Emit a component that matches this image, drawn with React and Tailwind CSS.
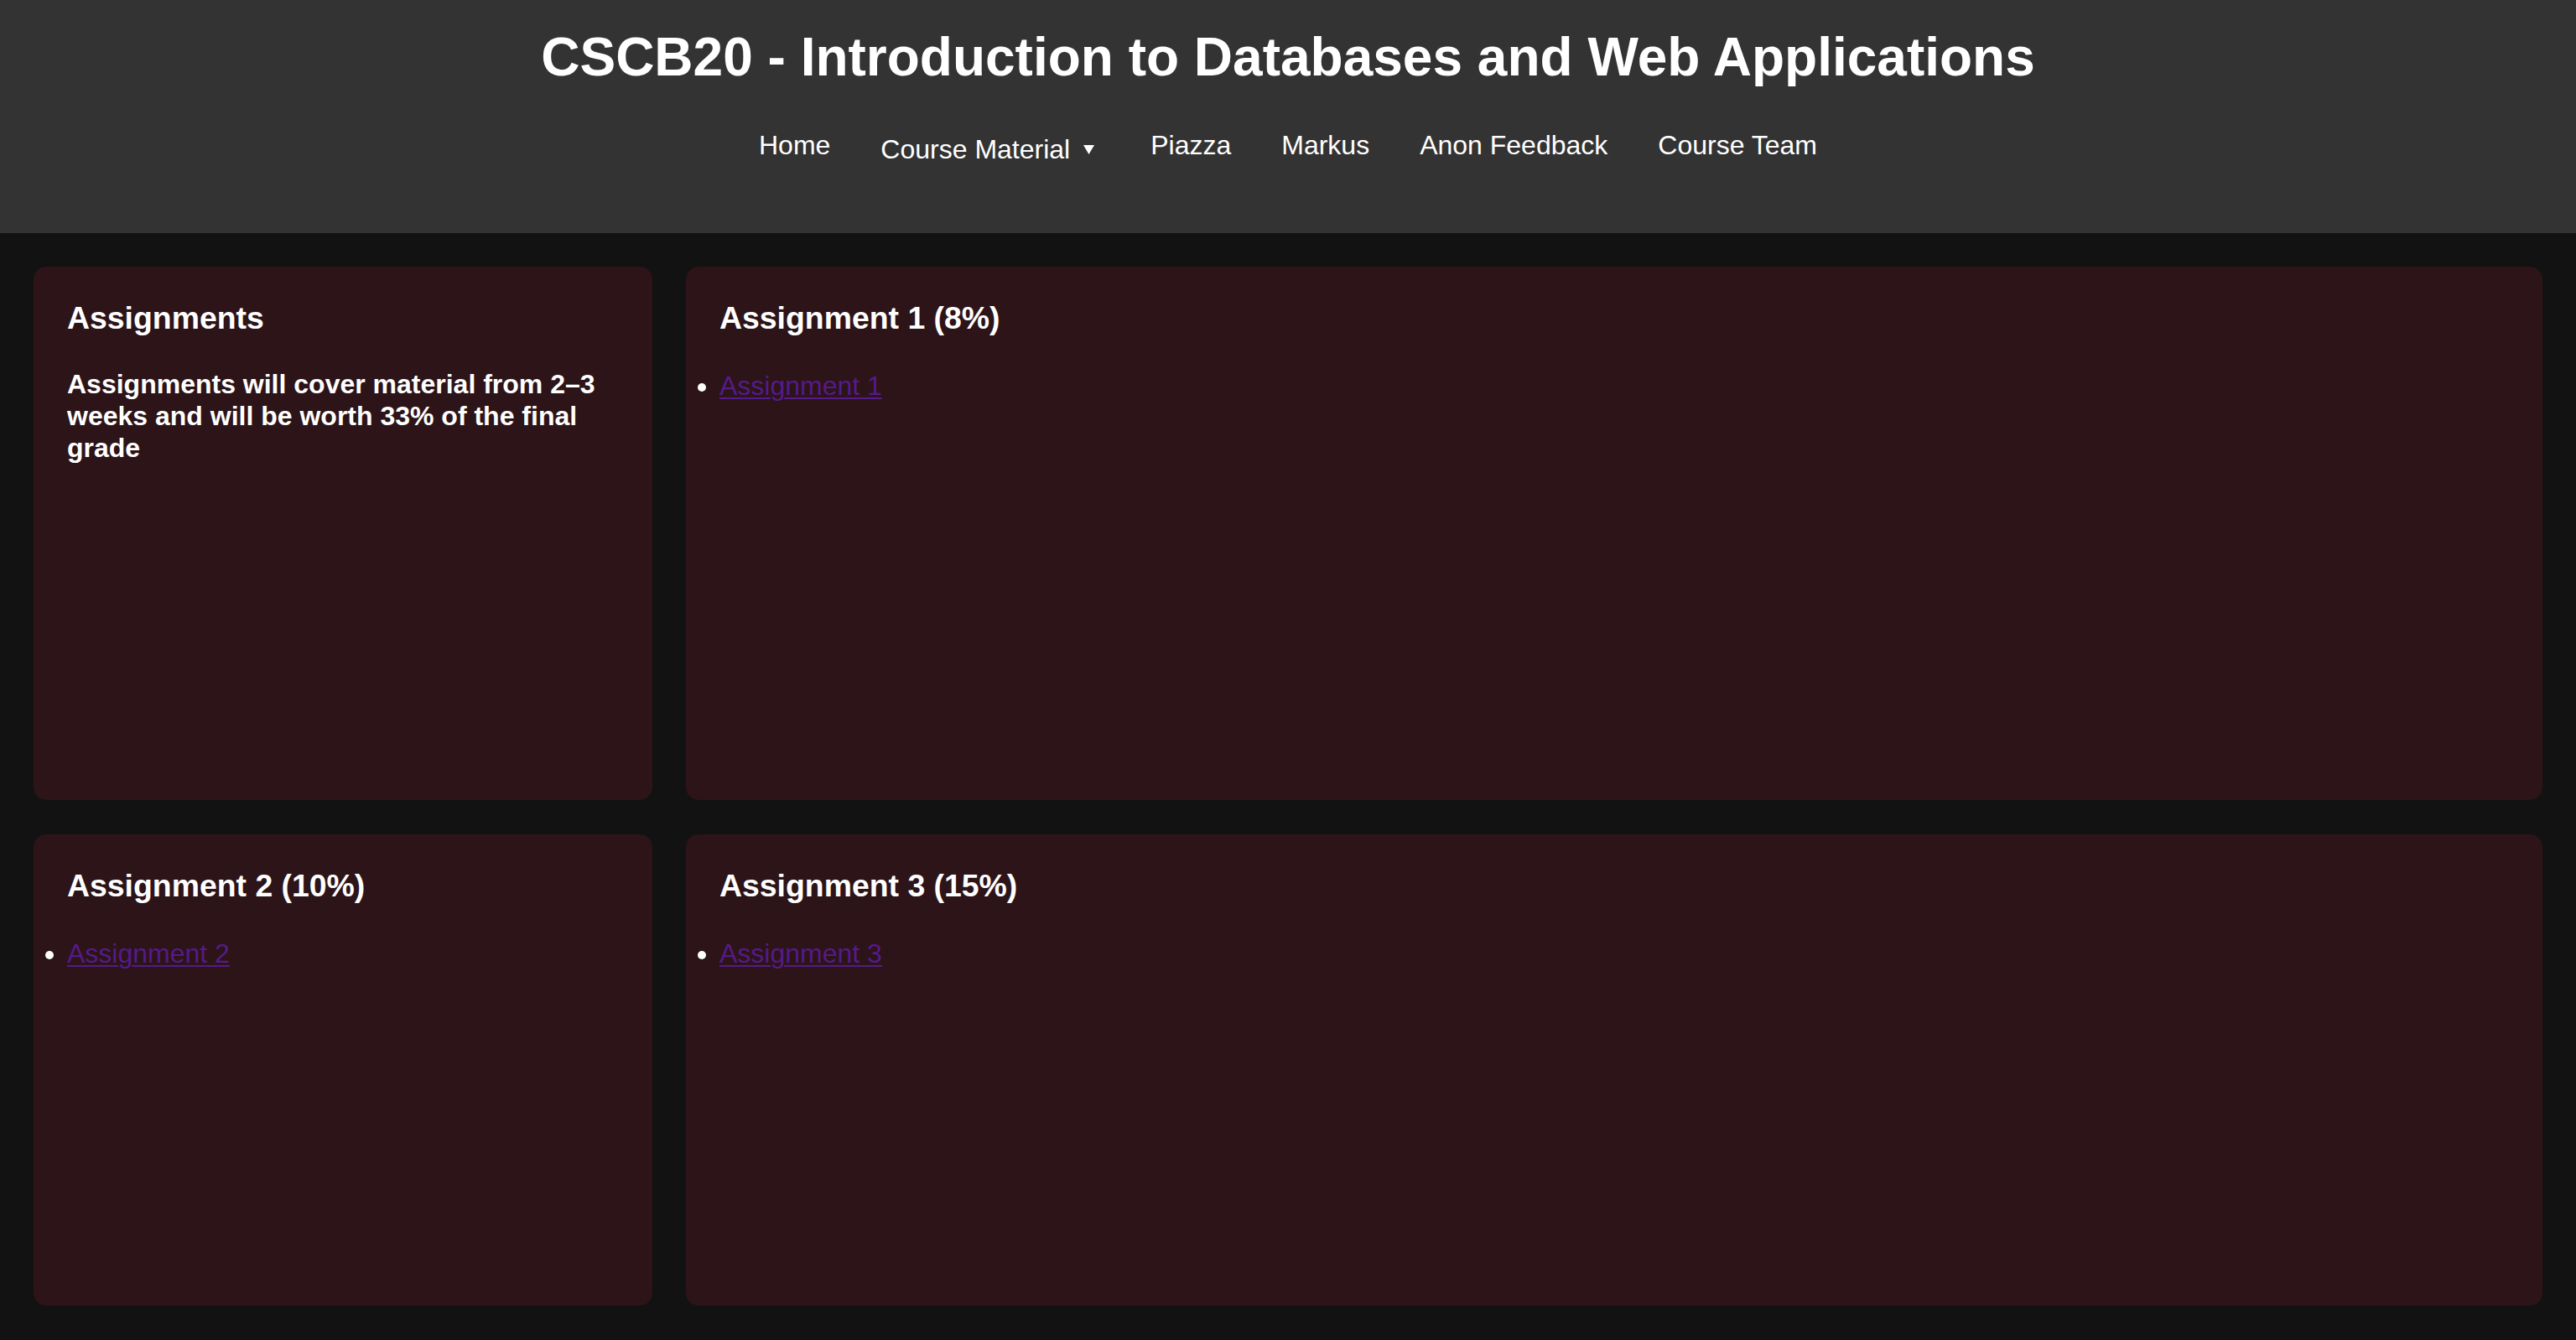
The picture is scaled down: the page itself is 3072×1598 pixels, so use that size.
const navItems = ['Home', 'Course Material', 'Piazza', 'Markus', 'Anon Feedback', 'Course Team']

function NavLink({ label }) {
  if (label === 'Course Material') {
    return (
      <div className="mt-[5px] flex items-center pr-[7px]">
        <span>{label}</span>
        <svg className="ml-[16px]" width="13" height="11" viewBox="0 0 13 11">
          <polygon points="0,0 13,0 6.5,11" fill="#ffffff" />
        </svg>
      </div>
    )
  }
  return <a className="text-white no-underline">{label}</a>
}

function Card({ title, children }) {
  return (
    <section className="rounded-[15px] bg-[#2c1418] px-10 pt-10 shadow-[0_0_24px_rgba(255,255,255,0.015)]">
      <h3 className="mb-[38px] text-[37.4px] font-bold leading-[43px] text-white">{title}</h3>
      {children}
    </section>
  )
}

function LinkList({ label }) {
  return (
    <ul className="list-disc pt-[3px] text-[32px] leading-[37px] marker:text-white">
      <li>
        <a href="#" className="text-[#551a8b] underline decoration-[2px] underline-offset-[3px]">
          {label}
        </a>
      </li>
    </ul>
  )
}

export default function App() {
  return (
    <div className="min-h-[1598px] bg-[#121212] font-['Liberation_Sans',Arial,sans-serif] text-white">
      <header className="flex h-[278px] flex-col items-center bg-[#333333] pt-[31px]">
        <h1 className="text-[64px] font-bold leading-[74px] text-white">
          CSCB20 - Introduction to Databases and Web Applications
        </h1>
        <nav className="mt-[50px] flex items-start gap-[60px] text-[32px] leading-[37px]">
          {navItems.map((item) => (
            <NavLink key={item} label={item} />
          ))}
        </nav>
      </header>

      <main className="grid grid-cols-[1fr_3fr] grid-rows-[636px_562px] gap-x-10 gap-y-[41px] p-10">
        <Card title="Assignments">
          <p className="text-[32px] font-bold leading-[38px]">
            Assignments will cover material from 2–3 weeks and will be worth 33% of the final grade
          </p>
        </Card>
        <Card title="Assignment 1 (8%)">
          <LinkList label="Assignment 1" />
        </Card>
        <Card title="Assignment 2 (10%)">
          <LinkList label="Assignment 2" />
        </Card>
        <Card title="Assignment 3 (15%)">
          <LinkList label="Assignment 3" />
        </Card>
      </main>
    </div>
  )
}
